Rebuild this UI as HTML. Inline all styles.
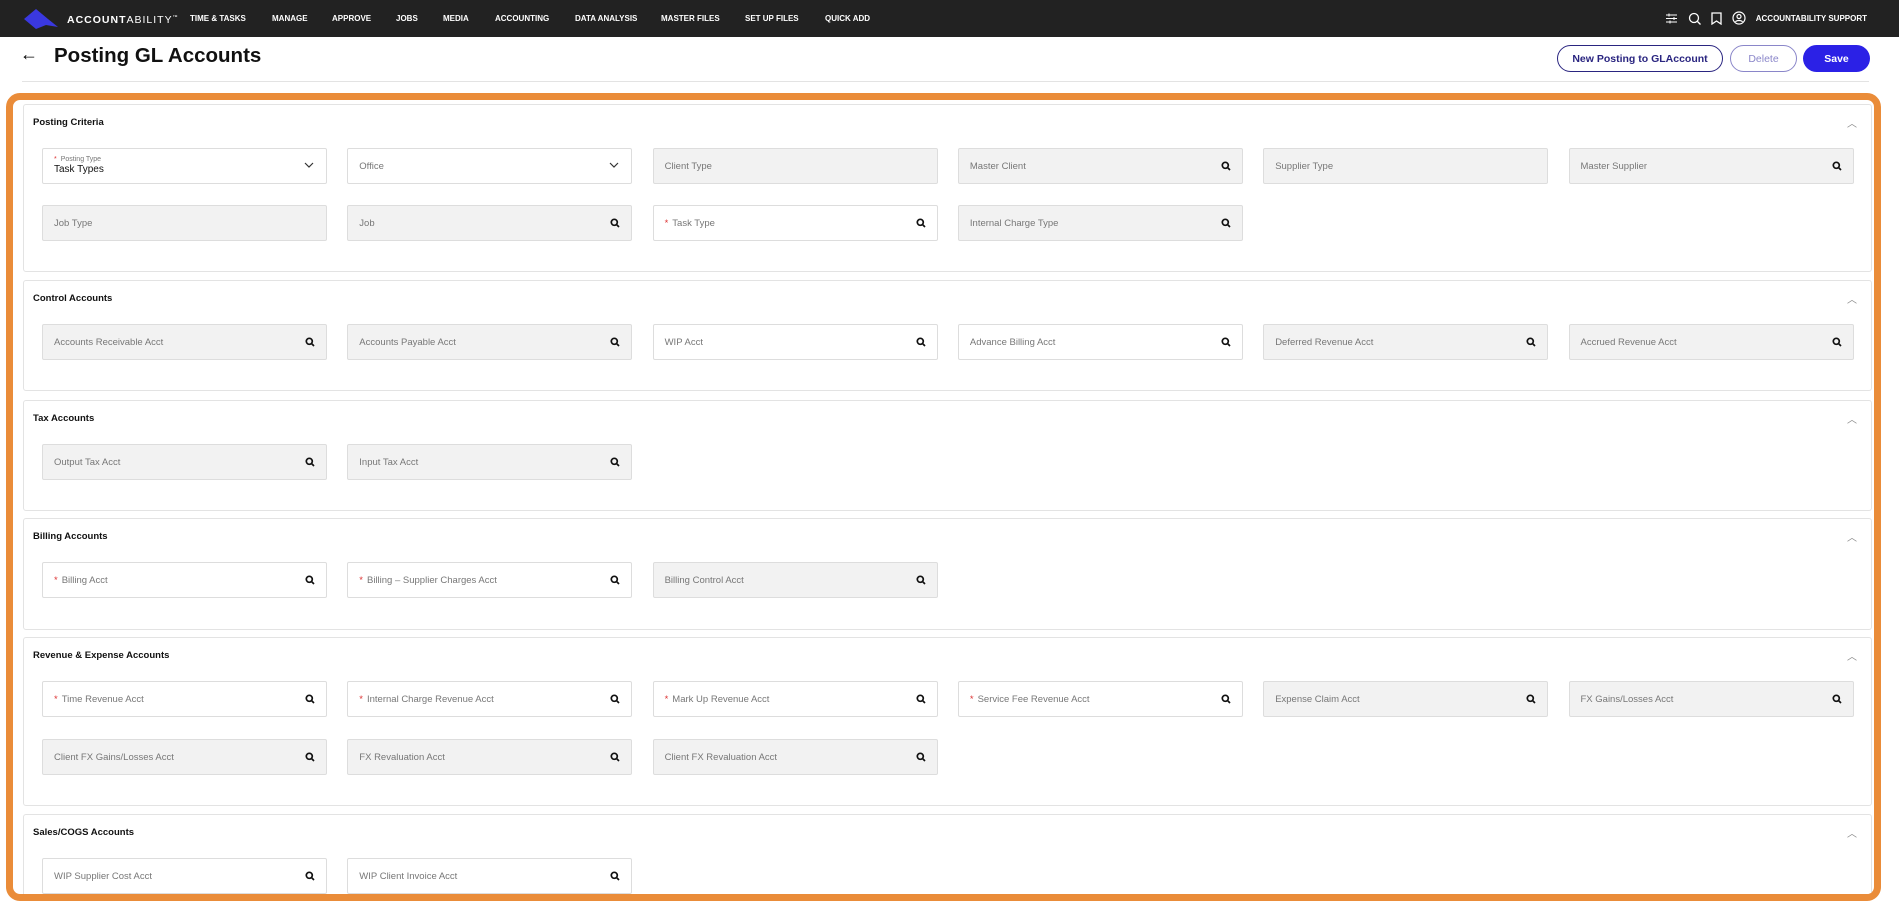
<!DOCTYPE html>
<html><head><meta charset="utf-8"><style>
*{box-sizing:border-box;margin:0;padding:0}
body{width:1899px;height:905px;overflow:hidden;background:#fff;font-family:"Liberation Sans",sans-serif;position:relative}
.nav{height:37px;background:#222}
.logo{position:absolute;left:24px;top:9px}
.brand{position:absolute;left:67px;top:14px;font-size:10.5px;letter-spacing:1px;color:#fff}
.brand b{font-weight:bold}
.menu span{position:absolute;top:14px;font-size:8px;font-weight:bold;color:#fff;white-space:nowrap}
.right{position:absolute;right:32px;top:11px;display:flex;align-items:center;gap:10px;font-size:8px;font-weight:bold;color:#fff}
.title{position:absolute;left:54px;top:44px;font-size:20.5px;font-weight:bold;color:#111}
.back{position:absolute;left:20px;top:44px;font-size:18px}
.hr{position:absolute;left:22px;right:30px;top:81px;border-top:1px solid #e3e3e3}
.btn{position:absolute;top:45px;height:27px;border-radius:14px;font-size:10.5px;font-weight:bold;display:flex;align-items:center;justify-content:center}
.frame{position:absolute;left:6px;top:93px;width:1875px;height:808px;border:7px solid #ea8c39;border-radius:14px;overflow:hidden}
.card{position:absolute;left:10px;width:1849px;border:1px solid #e3e3e3;border-radius:3px;background:#fff}
.card h3{position:absolute;left:9px;top:12px;font-size:9.5px;font-weight:bold;color:#111}
.caret{position:absolute;right:14px;top:10px;font-size:10px;color:#888}
.f{position:absolute;width:285px;height:36px;border:1px solid #ddd;border-radius:2px;font-size:9.5px;color:#777;padding:0 11px;display:flex;align-items:center;z-index:2}
.g{background:#f2f2f2}
.f .r{color:#d33;margin-right:4px}
.f .q{position:absolute;right:11px;top:12px}
.f .dd{position:absolute;right:11px;top:10px}
#fields{position:absolute;left:0;top:0;width:1899px;height:894px;overflow:hidden}
</style></head><body>
<div class="nav"></div>
<svg class="logo" width="36" height="20" viewBox="0 0 36 20"><path d="M0 10 L12 0 L24 10 L34 18 L22 16 L12 20Z" fill="#3a38e0"/></svg>
<div class="brand"><b>ACCOUNT</b>ABILITY<sup style="font-size:5px">™</sup></div>
<div class="menu"><span style="left:190px">TIME &amp; TASKS</span><span style="left:272px">MANAGE</span><span style="left:332px">APPROVE</span><span style="left:396px">JOBS</span><span style="left:443px">MEDIA</span><span style="left:495px">ACCOUNTING</span><span style="left:575px">DATA ANALYSIS</span><span style="left:661px">MASTER FILES</span><span style="left:745px">SET UP FILES</span><span style="left:825px">QUICK ADD</span></div>
<div class="right">
<svg width="13" height="13" viewBox="0 0 13 13" stroke="#fff" fill="none"><path d="M1 3h11M1 6.5h11M1 10h11M4 1.5v3M9 5v3M5 8.5v3"/></svg>
<svg width="13" height="13" viewBox="0 0 13 13" stroke="#fff" fill="none" stroke-width="1.3"><circle cx="6" cy="6" r="4.5"/><path d="M9.5 9.5l3 3"/></svg>
<svg width="11" height="13" viewBox="0 0 11 13" stroke="#fff" fill="none" stroke-width="1.3"><path d="M1 1h9v11l-4.5-3-4.5 3z"/></svg>
<svg width="14" height="14" viewBox="0 0 14 14" stroke="#fff" fill="none" stroke-width="1.2"><circle cx="7" cy="7" r="6"/><circle cx="7" cy="5.5" r="2"/><path d="M3.5 11c1-2 6-2 7 0"/></svg>
<span>ACCOUNTABILITY SUPPORT</span></div>
<div class="back">←</div>
<div class="title">Posting GL Accounts</div>
<div class="btn" style="left:1557px;width:166px;border:1px solid #2a2580;color:#2a2580">New Posting to GLAccount</div>
<div class="btn" style="left:1730px;width:67px;border:1px solid #8a86c9;color:#8a86c9;font-weight:normal">Delete</div>
<div class="btn" style="left:1803px;width:67px;background:#2b21e6;color:#fff">Save</div>
<div class="hr"></div>
<div class="frame">
<div class="card" style="top:4px;height:168px"><h3>Posting Criteria</h3><span class="caret">︿</span></div>
<div class="card" style="top:180px;height:111px"><h3>Control Accounts</h3><span class="caret">︿</span></div>
<div class="card" style="top:300px;height:111px"><h3>Tax Accounts</h3><span class="caret">︿</span></div>
<div class="card" style="top:418px;height:112px"><h3>Billing Accounts</h3><span class="caret">︿</span></div>
<div class="card" style="top:537px;height:169px"><h3>Revenue &amp; Expense Accounts</h3><span class="caret">︿</span></div>
<div class="card" style="top:714px;height:110px"><h3>Sales/COGS Accounts</h3><span class="caret">︿</span></div>
</div>
<div id="fields"></div>
<script>
var Q='<svg class="q" width="10" height="10" viewBox="0 0 10 10" fill="none" stroke="#111" stroke-width="1.7"><circle cx="4.3" cy="4.3" r="3"/><path d="M6.5 6.5l2.5 2.5"/></svg>';
var D='<svg class="dd" width="12" height="12" viewBox="0 0 12 12" fill="none" stroke="#333" stroke-width="1.2"><path d="M2 4l4 4 4-4"/></svg>';
var rows=[[148,[["*Posting Type","w","d"],["Office","w","d"],["Client Type","g",""],["Master Client","g","q"],["Supplier Type","g",""],["Master Supplier","g","q"]]],
[205,[["Job Type","g",""],["Job","g","q"],["*Task Type","w","q"],["Internal Charge Type","g","q"]]],
[324,[["Accounts Receivable Acct","g","q"],["Accounts Payable Acct","g","q"],["WIP Acct","w","q"],["Advance Billing Acct","w","q"],["Deferred Revenue Acct","g","q"],["Accrued Revenue Acct","g","q"]]],
[444,[["Output Tax Acct","g","q"],["Input Tax Acct","g","q"]]],
[562,[["*Billing Acct","w","q"],["*Billing – Supplier Charges Acct","w","q"],["Billing Control Acct","g","q"]]],
[681,[["*Time Revenue Acct","w","q"],["*Internal Charge Revenue Acct","w","q"],["*Mark Up Revenue Acct","w","q"],["*Service Fee Revenue Acct","w","q"],["Expense Claim Acct","g","q"],["FX Gains/Losses Acct","g","q"]]],
[739,[["Client FX Gains/Losses Acct","g","q"],["FX Revaluation Acct","g","q"],["Client FX Revaluation Acct","g","q"]]],
[858,[["WIP Supplier Cost Acct","w","q"],["WIP Client Invoice Acct","w","q"]]]];
var h='';
rows.forEach(function(r){r[1].forEach(function(f,i){
var t=f[0],req=t[0]=='*';if(req)t=t.slice(1);
var inner=(req?'<span class="r">*</span>':'')+t;
if(t=='Posting Type')inner='<div style="line-height:1.2"><div style="font-size:7px;color:#777"><span class="r">*</span>Posting Type</div><div style="color:#111;font-size:10px">Task Types</div></div>';
h+='<div class="f'+(f[1]=='g'?' g':'')+'" style="left:'+(42+i*305.3)+'px;top:'+r[0]+'px">'+inner+(f[2]=='q'?Q:f[2]=='d'?D:'')+'</div>';});});
document.getElementById('fields').innerHTML=h;
</script>
</body></html>
